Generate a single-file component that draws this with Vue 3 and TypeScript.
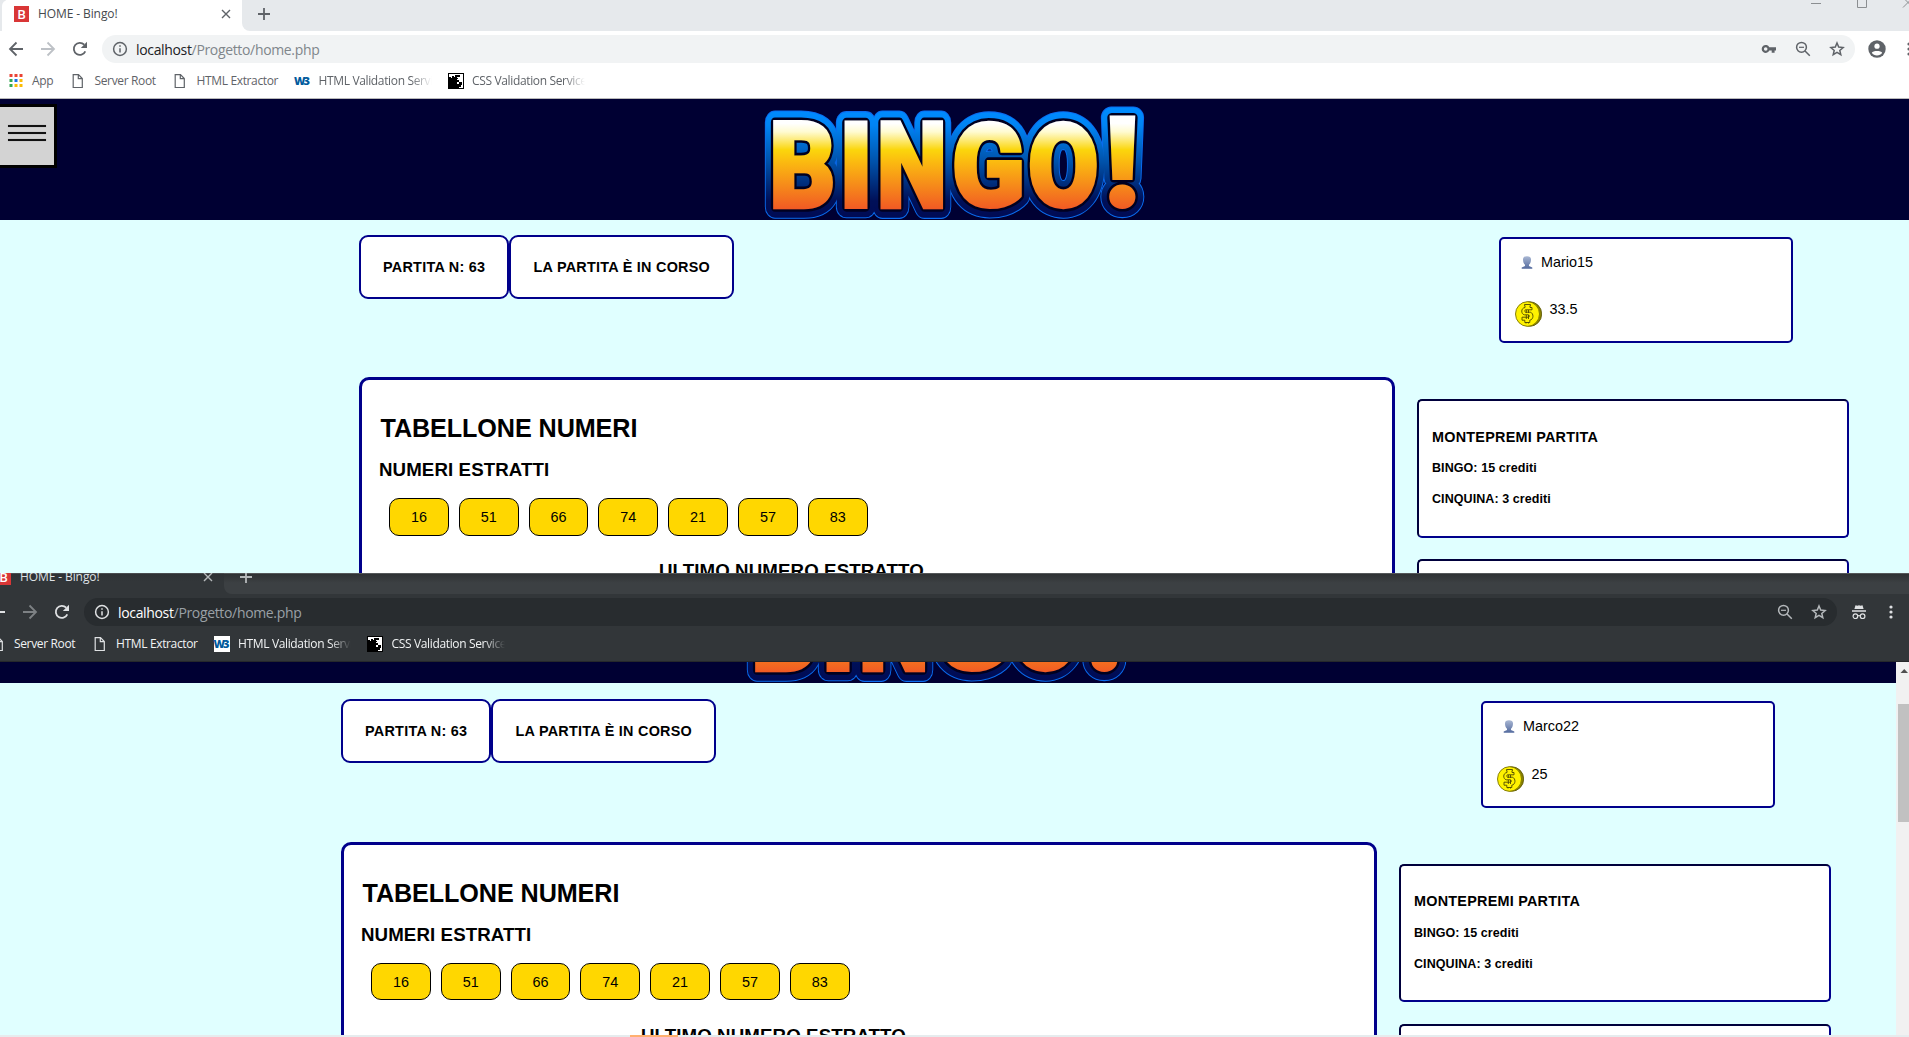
<script setup lang="ts">
interface BrowserWindow {
  id: string
  dark: boolean
  user: string
  credits: string
}

interface Bookmark {
  kind: 'apps' | 'file' | 'w3' | 'css'
  label: string
  width: number
}

interface Glyph {
  char: string
  x: number
  y: number
  w: number
  h: number
}

const windows: BrowserWindow[] = [
  { id: 'main', dark: false, user: 'Mario15', credits: '33.5' },
  { id: 'incognito', dark: true, user: 'Marco22', credits: '25' },
]

const bookmarks: Bookmark[] = [
  { kind: 'apps', label: 'App', width: 62.5 },
  { kind: 'file', label: 'Server Root', width: 102 },
  { kind: 'file', label: 'HTML Extractor', width: 122 },
  { kind: 'w3', label: 'HTML Validation Service', width: 153.5 },
  { kind: 'css', label: 'CSS Validation Service', width: 160 },
]

const visibleBookmarks = (dark: boolean) =>
  bookmarks.filter((b) => !(dark && b.kind === 'apps'))

const drawn: number[] = [16, 51, 66, 74, 21, 57, 83]

const glyphs: Glyph[] = [
  { char: 'B', x: 32.7, y: 25, w: 61, h: 89 },
  { char: 'I', x: 104, y: 25, w: 24, h: 89 },
  { char: 'N', x: 140, y: 25, w: 63.5, h: 89 },
  { char: 'G', x: 214.3, y: 24.5, w: 68, h: 89.7 },
  { char: 'O', x: 289.3, y: 24.5, w: 68, h: 89.7 },
  { char: '!', x: 369, y: 20, w: 27.2, h: 94 },
]

// The face is fattened by an outline of this width on every side.
const swell = 2

// Stretches each logo letter so that its ink fills the box reserved for it.
const pen = document.createElement('canvas').getContext('2d')!
pen.font = '900 100px Roboto'
const logo = glyphs.map((g) => {
  const m = pen.measureText(g.char)
  const sx = (g.w - 2 * swell) / (m.actualBoundingBoxLeft + m.actualBoundingBoxRight)
  const sy = (g.h - 2 * swell) / (m.actualBoundingBoxAscent + m.actualBoundingBoxDescent)
  const tx = g.x + swell + m.actualBoundingBoxLeft * sx
  const ty = g.y + swell + m.actualBoundingBoxAscent * sy
  return { char: g.char, matrix: `matrix(${sx} 0 0 ${sy} ${tx} ${ty})` }
})
</script>

<template>
  <div class="desktop">
    <section v-for="win in windows" :key="win.id" class="window" :class="{ dark: win.dark }">
      <div class="frame">
        <div class="chrome">
          <div class="tabstrip">
            <div class="strip-left"></div>
            <div class="tab">
              <span class="favicon">B</span>
              <span class="tab-title">HOME - Bingo!</span>
              <svg class="close" width="10" height="10" viewBox="0 0 10 10"><path d="M1 1l8 8M9 1l-8 8" /></svg>
            </div>
            <div class="strip-rest">
              <svg class="plus" width="12" height="12" viewBox="0 0 12 12"><path d="M6 0v12M0 6h12" /></svg>
              <svg class="controls" width="110" height="12" viewBox="0 0 110 12">
                <path d="M0 3.500h10M46.500-2v9.500h9V-2M92 7.500l10-10M92-2.500l10 10" />
              </svg>
            </div>
          </div>

          <div class="toolbar">
            <svg class="nav back" width="16" height="16" viewBox="0 0 16 16"><path d="M15 8H2M8.500 1.500L2 8l6.500 6.500" /></svg>
            <svg class="nav forward" width="16" height="16" viewBox="0 0 16 16"><path d="M1 8h13M7.500 1.500L14 8l-6.500 6.500" /></svg>
            <svg class="nav reload" width="16" height="16" viewBox="0 0 16 16">
              <path d="M13.300 10.300A6 6 0 1 1 12.200 3.700" /><path class="solid" d="M15 .8v6.200H8.800z" />
            </svg>
            <div class="omnibox">
              <svg class="info" width="16" height="16" viewBox="0 0 16 16">
                <circle cx="8" cy="8" r="6.400" /><path d="M8 7.200v4.300M8 4.200v1.600" />
              </svg>
              <span class="url"><b>localhost</b>/Progetto/home.php</span>
              <div class="actions">
                <svg v-if="!win.dark" class="key" width="16" height="16" viewBox="0 0 16 16">
                  <path class="solid" fill-rule="evenodd" d="M8.300 6.200H15v3.400h-1.400v2.200h-2.900V9.600H8.300A4 4 0 1 1 8.300 6.200zM4.700 6.200a1.800 1.800 0 1 0 0 3.600 1.800 1.800 0 0 0 0-3.600z" />
                </svg>
                <svg width="16" height="16" viewBox="0 0 16 16">
                  <circle cx="6.500" cy="6.300" r="4.900" /><path d="M10 10l4.800 4.800" /><path class="thin" d="M4 6.300h5" />
                </svg>
                <svg width="16" height="16" viewBox="0 0 16 16">
                  <path class="star" d="M8 2l1.700 4.100 4.400.4-3.300 2.900 1 4.300L8 11.400l-3.800 2.300 1-4.300-3.300-2.900 4.400-.4z" />
                </svg>
              </div>
            </div>
            <svg v-if="!win.dark" class="profile" width="18" height="18" viewBox="0 0 18 18">
              <circle class="solid" cx="9" cy="9" r="8.700" />
              <circle class="cut" cx="9" cy="6.200" r="2.600" /><path class="cut" d="M3.800 12.700c1-2.200 9.400-2.200 10.400 0-1.200 1.700-3 2.700-5.200 2.700s-4-1-5.200-2.700z" />
            </svg>
            <svg v-else class="profile" width="18" height="18" viewBox="0 0 18 18">
              <path class="solid" d="M5.500 2.200l2 .5 1.500-.4 1.500.4 2-.5L13.600 6H4.400zM2 7.200h14v1.500H2z" />
              <circle class="lens" cx="5.400" cy="13.200" r="2.300" /><circle class="lens" cx="12.600" cy="13.200" r="2.300" /><path class="lens" d="M7.700 12.900q1.300-.8 2.600 0" />
            </svg>
            <svg class="dots" width="4" height="16" viewBox="0 0 4 16">
              <circle cx="2" cy="3" r="1.600" /><circle cx="2" cy="8" r="1.600" /><circle cx="2" cy="13" r="1.600" />
            </svg>
          </div>

          <div class="bookmarks">
            <div v-for="mark in visibleBookmarks(win.dark)" :key="mark.label" class="bookmark" :class="'mark-' + mark.kind" :style="{ width: mark.width + 'px' }">
              <svg v-if="mark.kind === 'apps'" width="16" height="16" viewBox="0 0 16 16">
                <path fill="#ea4335" d="M1.500 1h3v3h-3zM6.500 1h3v3h-3zM11.500 1h3v3h-3z" />
                <path fill="#34a853" d="M1.500 6h3v3h-3zM1.500 11h3v3h-3z" />
                <path fill="#1a73e8" d="M6.500 6h3v3h-3z" />
                <path fill="#fbbc04" d="M11.500 6h3v3h-3zM6.500 11h3v3h-3zM11.500 11h3v3h-3z" />
              </svg>
              <svg v-else-if="mark.kind === 'file'" class="file" width="16" height="16" viewBox="0 0 16 16">
                <path d="M3.200 1.700h5.300l3.800 3.800v9H3.200zM8.300 1.700v4h4" />
              </svg>
              <span v-else-if="mark.kind === 'w3'" class="w3">W3</span>
              <svg v-else width="16" height="16" viewBox="0 0 16 16">
                <path d="M0 0h16v16H0z" fill="#000" />
                <path d="M1 1h14v14h-4v-1h2v-2h-1v-2h-1v1H9V9h2V7H9V6h1V5H9V4h1V2H7v2H6V3H4v2H3V4H1z" fill="#fff" />
                <path d="M10 2h2v2h-2zM11 9h3v3h-2v-1h-1z" fill="#000" />
              </svg>
              <span class="label">{{ mark.label }}</span>
            </div>
          </div>
        </div>

        <div class="viewport">
          <main class="page">
            <header class="banner">
              <button class="menu" aria-label="Menu"><i></i><i></i><i></i></button>
              <svg class="logo" width="430" height="121" viewBox="0 4 430 121">
                <defs>
                  <linearGradient :id="'face-' + win.id" gradientUnits="userSpaceOnUse" x1="0" y1="20" x2="0" y2="114">
                    <stop offset="0.090" stop-color="#fff" /><stop offset="0.180" stop-color="#fffbd0" /><stop offset="0.370" stop-color="#fbd60c" /><stop offset="0.500" stop-color="#fbba10" /><stop offset="1" stop-color="#f15a24" />
                  </linearGradient>
                  <linearGradient :id="'halo-' + win.id" gradientUnits="userSpaceOnUse" x1="0" y1="14" x2="0" y2="122">
                    <stop offset="0" stop-color="#008cff" /><stop offset="0.150" stop-color="#0084f4" /><stop offset="0.500" stop-color="#0050a8" /><stop offset="0.850" stop-color="#001058" /><stop offset="1" stop-color="#000b55" />
                  </linearGradient>
                  <mask :id="'shape-' + win.id" maskUnits="userSpaceOnUse" x="0" y="0" width="430" height="130">
                    <text v-for="g in logo" :key="g.char" :transform="g.matrix" class="glyph m-halo">{{ g.char }}</text>
                  </mask>
                  <mask :id="'letters-' + win.id" maskUnits="userSpaceOnUse" x="0" y="0" width="430" height="130">
                    <text v-for="g in logo" :key="g.char" :transform="g.matrix" class="glyph m-face">{{ g.char }}</text>
                  </mask>
                </defs>
                <g class="rim">
                  <text v-for="g in logo" :key="g.char" :transform="g.matrix" class="glyph">{{ g.char }}</text>
                </g>
                <rect width="430" height="130" :fill="`url(#halo-${win.id})`" :mask="`url(#shape-${win.id})`" />
                <g class="edge">
                  <text v-for="g in logo" :key="g.char" :transform="g.matrix" class="glyph">{{ g.char }}</text>
                </g>
                <rect width="430" height="130" :fill="`url(#face-${win.id})`" :mask="`url(#letters-${win.id})`" />
              </svg>
            </header>

            <div class="status-row">
              <div class="status number">PARTITA N: 63</div>
              <div class="status state">LA PARTITA È IN CORSO</div>
              <div class="account">
                <div class="name">
                  <svg width="12" height="13" viewBox="0 0 12 13">
                    <defs>
                      <linearGradient :id="'bust-' + win.id" x1="0" y1="0" x2="0" y2="1">
                        <stop offset="0" stop-color="#a9b7d3" /><stop offset="1" stop-color="#536a9e" />
                      </linearGradient>
                    </defs>
                    <path :fill="`url(#bust-${win.id})`" d="M6 .3c2.600 0 4 1 4 3.200 0 2-.6 4.200-2 5.200v1.400l3.300 1.300v1.300H.7v-1.300L4 10.100V8.700C2.600 7.700 2 5.500 2 3.500 2 1.300 3.400.3 6 .3z" />
                  </svg>
                  <span>{{ win.user }}</span>
                </div>
                <div class="credits">
                  <svg width="27" height="26" viewBox="0 0 27 26">
                    <ellipse cx="14.500" cy="13" rx="12.200" ry="12.300" fill="#8c8400" stroke="#555000" stroke-width="0.800" />
                    <ellipse cx="12.500" cy="13" rx="12" ry="12.300" fill="#fff200" stroke="#7a7300" stroke-width="0.900" />
                    <path d="M17 8.800V6.500h-2V4.500h.5V3.500H9.500v1h.5v2C5.800 7 5.800 13 9.300 13.800h4c1.500.6 1.500 2 0 2.400H7v3h2.800v2.300h5v-2.300c4-.5 4.200-7 .5-8h-4.800c-1-.5-1-2 0-2.400zM11.300 9v3M13.500 9v3M11.300 14v4M13.500 14v4M11 21v1.500M13.500 21v1.500" fill="none" stroke="#4d4800" stroke-width="0.900" />
                  </svg>
                  <span>{{ win.credits }}</span>
                </div>
              </div>
            </div>

            <div class="board-row">
              <section class="board">
                <h1>TABELLONE NUMERI</h1>
                <h2>NUMERI ESTRATTI</h2>
                <ul class="numbers">
                  <li v-for="n in drawn" :key="n">{{ n }}</li>
                </ul>
                <h2 class="last">ULTIMO NUMERO ESTRATTO</h2>
              </section>
              <aside class="side">
                <div class="prize">
                  <h3>MONTEPREMI PARTITA</h3>
                  <p>BINGO: 15 crediti</p>
                  <p>CINQUINA: 3 crediti</p>
                </div>
                <div class="prize"></div>
              </aside>
            </div>
          </main>
          <div v-if="win.dark" class="scrollbar">
            <svg width="17" height="17" viewBox="0 0 17 17"><path d="M4.500 11h7.500L8.250 7z" fill="#505050" /></svg>
            <div class="thumb"></div>
          </div>
        </div>
      </div>
    </section>
    <footer class="taskbar"><span></span></footer>
  </div>
</template>

<style>
body {
  margin: 0;
  overflow: hidden;
}
</style>

<style scoped>
.desktop {
  width: 1909px;
  height: 1037px;
  overflow: hidden;
  display: flex;
  flex-direction: column;
  font-family: "Liberation Sans", Arial, sans-serif;
  color: #000;
}

.window {
  --strip: #e6e9ec;
  --bar: #fff;
  --field: #f1f3f4;
  --icon: #5f6368;
  --faint: #bdc1c6;
  --text: #5f6368;
  --title: #45494d;
  --url: #80868b;
  --host: #202124;
  --line: #b9b9b9;
  height: 573px;
  overflow: hidden;
  flex: none;
}

.window.dark {
  --strip: #3c4043;
  --bar: #323639;
  --field: #282c2f;
  --icon: #dfe1e3;
  --faint: #7d8184;
  --text: #f1f3f4;
  --title: #dfe1e5;
  --url: #9aa0a6;
  --host: #fff;
  --line: #26282b;
  height: 462px;
}

.frame {
  width: 1931px;
}

.dark .frame {
  margin: -10px 0 0 -18px;
}

.chrome {
  height: 98px;
  border-bottom: 1px solid var(--line);
  background: var(--bar);
  font-family: "Open Sans", "Noto Sans", sans-serif;
}

.chrome svg {
  flex: none;
  fill: none;
  stroke: var(--icon);
  stroke-width: 1.8;
}

.chrome svg .solid {
  fill: var(--icon);
  stroke: none;
}

.tabstrip {
  display: flex;
  height: 31px;
  background: linear-gradient(to right, var(--strip) 6px, var(--bar) 6px 240px, var(--bar) 240px);
}

.strip-left {
  width: 2px;
  height: 28px;
  background: var(--strip);
  border-bottom-right-radius: 4px;
}

.tab {
  width: 240px;
  box-sizing: border-box;
  padding: 0 11px 3px 12px;
  display: flex;
  align-items: center;
  background: var(--bar);
  border-radius: 6px 6px 0 0;
}

.dark .tab {
  background: linear-gradient(#4a4d50 11px, #2e3134 11px, #323639 18px);
}

.favicon {
  width: 15px;
  height: 16px;
  margin-right: 9px;
  background: #d93636;
  color: #fff;
  font-size: 13px;
  font-weight: 600;
  line-height: 16px;
  text-align: center;
}

.tab-title {
  flex: 1;
  font-size: 12px;
  letter-spacing: -0.1px;
  line-height: 16px;
  margin-bottom: 1px;
  white-space: nowrap;
  color: var(--title);
}

.chrome .close {
  stroke-width: 1.4;
}

.strip-rest {
  flex: 1;
  display: flex;
  justify-content: space-between;
  align-items: flex-start;
  padding: 0 10px 0 16px;
  background: var(--strip);
  border-bottom-left-radius: 8px;
}

.dark .strip-rest {
  background: linear-gradient(#55585a 11px, #2f3234 11px, #3c4043 20px);
}

.chrome .plus {
  margin-top: 8px;
}

.dark .plus,
.dark .close {
  stroke: #b6b9bb;
}

.chrome .controls {
  stroke-width: 1;
  stroke: #8b8e91;
}

.dark .controls {
  visibility: hidden;
}

.toolbar {
  height: 36px;
  display: flex;
  align-items: center;
  padding-left: 8px;
}

.back,
.forward {
  margin-right: 16px;
}

.chrome .forward {
  stroke: var(--faint);
}

.omnibox {
  width: 1753px;
  height: 28px;
  box-sizing: border-box;
  margin-left: 14px;
  padding: 0 10px;
  display: flex;
  align-items: center;
  background: var(--field);
  border-radius: 14px;
}

.chrome .info {
  stroke-width: 1.5;
}

.url {
  margin: 0 auto 0 8px;
  font-size: 14px;
  letter-spacing: -0.34px;
  color: var(--url);
}

.url b {
  font-weight: 400;
  color: var(--host);
}

.actions {
  display: flex;
  gap: 18px;
}

.chrome .actions svg {
  stroke-width: 1.5;
}

.dark .actions {
  --icon: #b4b8bb;
}

.chrome .actions .thin {
  stroke-width: 1.2;
}

.profile {
  margin-left: 13px;
}

.chrome svg .cut {
  fill: var(--bar);
  stroke: none;
}

.chrome svg .lens {
  stroke-width: 1.2;
}

.dots {
  margin-left: 21px;
}

.chrome .dots {
  fill: var(--icon);
  stroke: none;
}

.bookmarks {
  height: 28px;
  display: flex;
  align-items: center;
  padding-left: 7.5px;
}

.bookmark {
  display: flex;
  align-items: center;
  flex: none;
}

.chrome .file {
  stroke-width: 1.2;
}

.chrome .mark-apps svg,
.chrome .mark-css svg {
  stroke: none;
}

.w3 {
  flex: none;
  width: 16px;
  height: 16px;
  color: #005a9c;
  font-size: 11px;
  font-weight: 800;
  letter-spacing: -2px;
  line-height: 16px;
}

.dark .w3 {
  background: #fff;
}

.label {
  margin-left: 8.5px;
  white-space: nowrap;
  font-size: 12px;
  letter-spacing: -0.35px;
  line-height: 18px;
  color: var(--text);
}

.mark-w3 .label,
.mark-css .label {
  width: 113px;
  overflow: hidden;
  flex: none;
  mask-image: linear-gradient(to right, #000 92px, transparent 113px);
}

.viewport {
  position: relative;
  height: 474px;
  overflow: hidden;
}

.page {
  height: 700px;
  background: #e0ffff;
}

.dark .page {
  margin-top: -100px;
}

.banner {
  height: 121px;
  display: flex;
  align-items: flex-start;
  background: #000033;
}

.menu {
  width: 60px;
  height: 64px;
  margin: 5px 0 0 -3px;
  padding: 18px 0 0 8px;
  box-sizing: border-box;
  display: flex;
  flex-direction: column;
  justify-content: flex-start;
  gap: 5px;
  border: 3px solid #000;
  border-radius: 0;
  background: #d3d3d3;
}

.menu i {
  width: 38px;
  height: 2px;
  background: #111;
  box-shadow: 0 0 1px #777;
}

.logo {
  margin-left: 683px;
}

.glyph {
  font-family: Roboto, sans-serif;
  font-size: 100px;
  font-weight: 900;
  stroke-linejoin: round;
  vector-effect: non-scaling-stroke;
}

.rim .glyph {
  fill: #0a6cf0;
  stroke: #0a6cf0;
  stroke-width: 22px;
}

.m-halo {
  fill: #fff;
  stroke: #fff;
  stroke-width: 20px;
}

.edge .glyph {
  fill: #000020;
  stroke: #000020;
  stroke-width: 9px;
}

.m-face {
  fill: #fff;
  stroke: #fff;
  stroke-width: 4px;
  stroke-linejoin: miter;
}

.status-row {
  height: 157px;
  box-sizing: border-box;
  padding: 15px 0 0 359px;
  display: flex;
  align-items: flex-start;
}

.dark .status-row {
  height: 159px;
  padding-top: 16px;
}

.status {
  height: 64px;
  box-sizing: border-box;
  display: flex;
  align-items: center;
  border: 2px solid #00008b;
  border-radius: 9px;
  background: #fff;
  font-size: 14.4px;
  font-weight: 700;
  white-space: nowrap;
}

.number {
  width: 149.5px;
  padding-left: 22px;
  letter-spacing: 0.26px;
}

.state {
  width: 225.5px;
  padding-left: 23px;
  letter-spacing: 0.26px;
}

.account {
  width: 294px;
  height: 106px;
  margin: 2px 0 0 765px;
  box-sizing: border-box;
  border: 2px solid #00008b;
  border-radius: 5px;
  background: #fff;
  font-size: 14.4px;
}

.dark .account {
  height: 107px;
}

.name {
  height: 20px;
  padding: 13px 0 0 20px;
  display: flex;
  align-items: center;
  gap: 8px;
}

.credits {
  padding: 29px 0 0 14px;
  display: flex;
  align-items: flex-start;
  gap: 7.5px;
}

.dark .credits {
  padding-top: 30px;
}

.credits span {
  line-height: 16px;
}

.board-row {
  display: flex;
  align-items: flex-start;
  padding-left: 359px;
}

.board {
  width: 1035.5px;
  height: 400px;
  box-sizing: border-box;
  padding: 33px 17px 0;
  border: 3px solid #00008b;
  border-radius: 10px;
  background: #fff;
}

h1,
h2,
h3,
p,
ul {
  margin: 0;
  font-weight: 700;
  white-space: nowrap;
}

h1 {
  margin-left: 1.5px;
  font-size: 25.2px;
  letter-spacing: -0.1px;
  line-height: 30px;
}

h2 {
  margin-top: 15px;
  font-size: 18.7px;
  letter-spacing: 0.1px;
  line-height: 24px;
}

.last {
  margin: 23px 0 0 280px;
}

.numbers {
  display: flex;
  gap: 10px;
  margin-top: 16px;
  padding: 0 0 0 10px;
  list-style: none;
}

.numbers li {
  width: 59.8px;
  height: 38px;
  box-sizing: border-box;
  border: 1px solid #000;
  border-radius: 10px;
  background: #ffd700;
  font-size: 14.4px;
  font-weight: 400;
  line-height: 37px;
  text-align: center;
}

.dark .numbers li {
  height: 37px;
  margin-bottom: 1px;
}

.side {
  width: 432px;
  margin: 22px 0 0 22.5px;
}

.prize {
  height: 139px;
  margin-bottom: 21px;
  box-sizing: border-box;
  padding: 26px 13px 0;
  border: 2px solid;
  border-color: #00003c #00008b #00008b #00003c;
  border-radius: 5px;
  background: #fff;
}

.dark .prize {
  height: 138px;
  margin-bottom: 22px;
  padding-top: 25px;
}

h3 {
  font-size: 14.4px;
  letter-spacing: 0.24px;
  line-height: 20px;
}

.dark h3 {
  margin-bottom: 12px;
}

.prize p {
  margin-top: 11px;
  font-size: 12.5px;
  letter-spacing: 0.08px;
  line-height: 20px;
}

.dark h3 + p {
  margin-top: 0;
}

.scrollbar {
  position: absolute;
  top: 0;
  left: 1914px;
  width: 17px;
  height: 474px;
  background: #f1f1f1;
}

.scrollbar svg {
  display: block;
}

.thumb {
  width: 17px;
  height: 118px;
  margin: 25px 0 0 2px;
  background: #c1c1c1;
}

.taskbar {
  height: 2px;
  background: #e6ecee;
}

.taskbar span {
  display: block;
  width: 48px;
  height: 2px;
  margin-left: 630px;
  background: #ffb070;
}
</style>
